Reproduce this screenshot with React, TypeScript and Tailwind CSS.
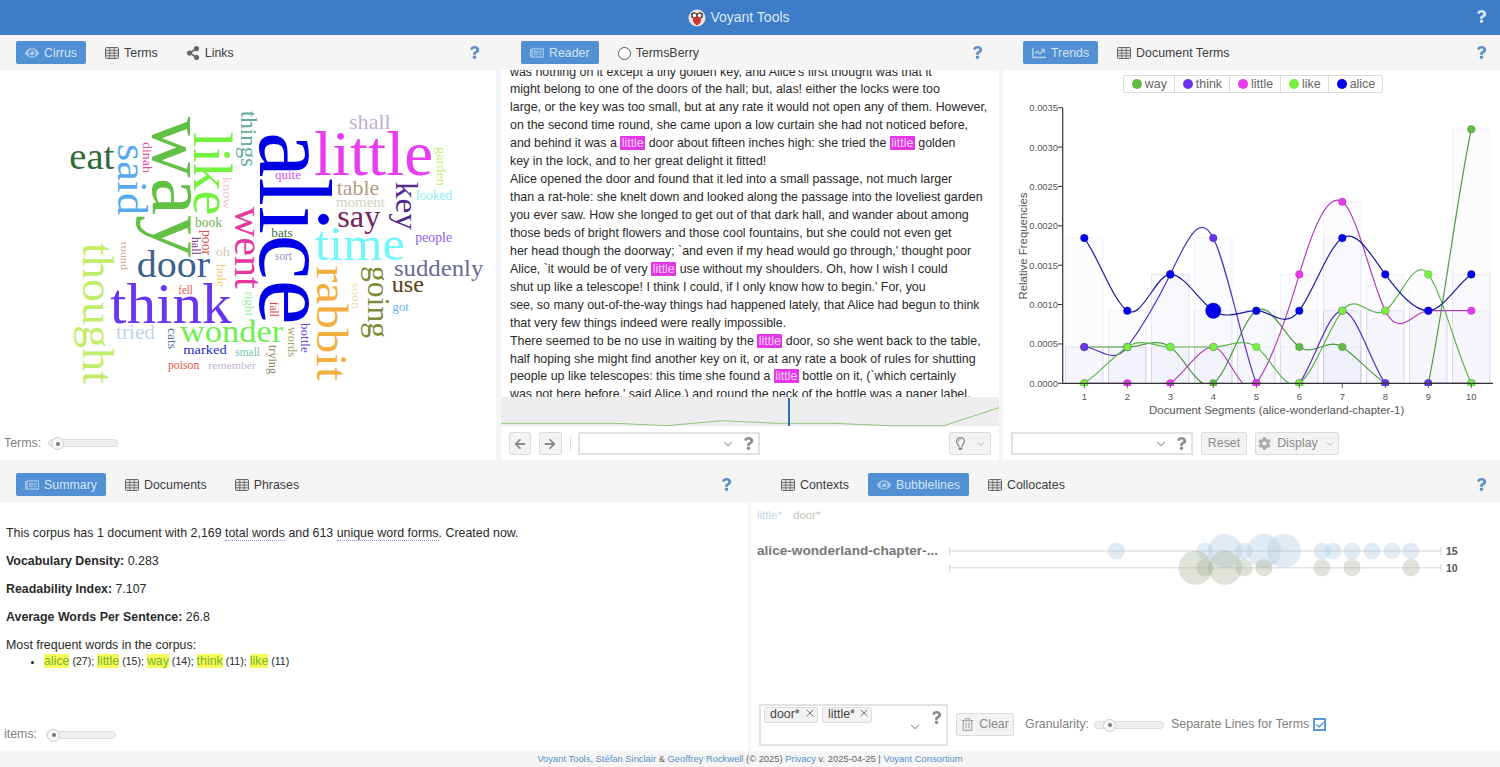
import React from "react";
import {
  FaArrowLeft,
  FaArrowRight,
  FaCheck,
  FaChartLine,
  FaCog,
  FaEye,
  FaQuestion,
  FaRegLightbulb,
  FaRegNewspaper,
  FaRegTrashAlt,
  FaShareAlt,
} from "react-icons/fa";
import { ChevronDown, X } from "lucide-react";

// word, x, y, length, size, colour (x/y is the start of the baseline)
const flatWords: [string, number, number, number, number, string][] = [
  ["little", 314, 175, 119, 63, "#e83cf0"],
  ["eat", 69.3, 169, 45, 37, "#2f6b38"],
  ["shall", 349, 128.7, 41.7, 22, "#c4aed6"],
  ["quite", 275, 179.3, 26, 12, "#d04fe8"],
  ["table", 336.7, 195, 42.6, 21, "#b89a7e"],
  ["moment", 336, 206.7, 49, 14, "#cfcfc6"],
  ["looked", 416, 200, 36, 14, "#8ef0f5"],
  ["say", 337.3, 226.7, 43, 31, "#77235f"],
  ["book", 195, 227.3, 27, 14, "#6fb85a"],
  ["bats", 271.3, 236.7, 21.3, 13, "#3f6f43"],
  ["people", 415.3, 241.7, 36.7, 14, "#8a5cf0"],
  ["time", 315, 260, 90, 48, "#73f5fa"],
  ["oh", 215.7, 256, 14.3, 13, "#cfc8a8"],
  ["sort", 275, 260, 17, 12, "#9c8ec0"],
  ["door", 136.7, 276.7, 73.3, 37, "#3f5f8f"],
  ["suddenly", 394, 275.7, 89.3, 24, "#6a6a9a"],
  ["use", 391.7, 292.3, 32.3, 23, "#5a3d12"],
  ["fell", 178.3, 294, 14.4, 12, "#e05a4f"],
  ["think", 110, 323.3, 121.7, 58, "#6a35f0"],
  ["got", 392.3, 310.7, 16.7, 13, "#6ab5f5"],
  ["tried", 116, 339.3, 39, 21, "#bfd4e6"],
  ["wonder", 180, 341.7, 103.3, 32, "#6fef4f"],
  ["marked", 183.3, 354.3, 43.4, 13, "#2828d0"],
  ["small", 235.3, 356, 24.7, 12, "#76c0b0"],
  ["poison", 168, 368.7, 31.3, 12, "#e0523f"],
  ["remember", 208.3, 368.7, 47.7, 11, "#c4b4d4"],
];

const turnedWords: [string, number, number, number, number, string][] = [
  ["alice", 260, 132, 193, 103, "#0000e6"],
  ["way", 153, 117, 140, 80, "#62c045"],
  ["like", 194, 132, 83, 54, "#73f23d"],
  ["things", 241, 111, 56, 23, "#66aaa0"],
  ["said", 118, 144, 71, 42, "#55aaf0"],
  ["dinah", 143.3, 142, 31, 13, "#e54f9e"],
  ["know", 222.7, 176.7, 32.3, 12, "#f5c5cf"],
  ["garden", 437, 147, 39, 13, "#c9ee7a"],
  ["key", 395.7, 181.7, 48.3, 32, "#552a8f"],
  ["went", 235, 206.7, 82, 40, "#e5399e"],
  ["poor", 201.7, 230, 25, 14, "#d9534f"],
  ["hall", 192.3, 236.7, 18.3, 13, "#7d3c8c"],
  ["round", 120.7, 241.7, 28.3, 11, "#d4a797"],
  ["hole", 216.7, 264, 23, 13, "#f5c97c"],
  ["thought", 83.3, 243, 141, 45, "#c1ee6a"],
  ["right", 245, 291.7, 24.3, 12, "#9cf09a"],
  ["fall", 270, 301.7, 15.3, 12, "#d9463f"],
  ["soon", 351.7, 282.7, 26.3, 12, "#efe0b0"],
  ["rabbit", 316.7, 266, 114.7, 45, "#f4ae3d"],
  ["going", 367.7, 266, 72, 32, "#7f8a3a"],
  ["words", 287.7, 327, 30, 12, "#9da56a"],
  ["bottle", 300.7, 323, 29.7, 13, "#6a3fd0"],
  ["trying", 269.3, 345, 29, 12, "#8a8356"],
  ["cats", 168.3, 328, 21, 12, "#4f6b9a"],
];

const readerLines = [
  "was nothing on it except a tiny golden key, and Alice's first thought was that it",
  "might belong to one of the doors of the hall; but, alas! either the locks were too",
  "large, or the key was too small, but at any rate it would not open any of them. However,",
  "on the second time round, she came upon a low curtain she had not noticed before,",
  "and behind it was a |little| door about fifteen inches high: she tried the |little| golden",
  "key in the lock, and to her great delight it fitted!",
  "Alice opened the door and found that it led into a small passage, not much larger",
  "than a rat-hole: she knelt down and looked along the passage into the loveliest garden",
  "you ever saw. How she longed to get out of that dark hall, and wander about among",
  "those beds of bright flowers and those cool fountains, but she could not even get",
  "her head though the doorway; `and even if my head would go through,' thought poor",
  "Alice, `it would be of very |little| use without my shoulders. Oh, how I wish I could",
  "shut up like a telescope! I think I could, if I only know how to begin.' For, you",
  "see, so many out-of-the-way things had happened lately, that Alice had begun to think",
  "that very few things indeed were really impossible.",
  "There seemed to be no use in waiting by the |little| door, so she went back to the table,",
  "half hoping she might find another key on it, or at any rate a book of rules for shutting",
  "people up like telescopes: this time she found a |little| bottle on it, (`which certainly",
  "was not here before,' said Alice,) and round the neck of the bottle was a paper label,",
];

const trendTerms = [
  { name: "way", dot: "#62b944", line: "#4f9a3c", counts: [1, 1, 1, 0, 2, 1, 1, 0, 0, 7] },
  { name: "think", dot: "#6a35ec", line: "#5a2fc0", counts: [1, 1, 3, 4, 0, 0, 2, 0, 0, 0] },
  { name: "little", dot: "#e63ae9", line: "#b040b8", counts: [0, 0, 0, 1, 0, 3, 5, 2, 2, 2] },
  { name: "like", dot: "#77f042", line: "#5cb84a", counts: [0, 1, 1, 1, 1, 0, 2, 2, 3, 0] },
  { name: "alice", dot: "#0000ee", line: "#1a1a9a", counts: [4, 2, 3, 2, 2, 2, 4, 3, 2, 3] },
];

const segX = (i: number) => 1084.3 + i * 43;
const countY = (c: number) => 383.3 - c * 36.3;

// cardinal spline through the counts, same overshoot as the original chart
const curvePath = (counts: number[]) => {
  const k = 0.8;
  const slope = (i: number) =>
    k * (counts[Math.min(i + 1, counts.length - 1)] - counts[Math.max(i - 1, 0)]);
  let d = `M${segX(0)} ${countY(counts[0])}`;
  for (let i = 0; i < counts.length - 1; i++) {
    const y1 = countY(counts[i] + slope(i) / 3);
    const y2 = countY(counts[i + 1] - slope(i + 1) / 3);
    d += ` C${segX(i) + 14.33} ${y1} ${segX(i + 1) - 14.33} ${y2} ${segX(i + 1)} ${countY(counts[i + 1])}`;
  }
  return d;
};

const yTicks = ["0.0000", "0.0005", "0.0010", "0.0015", "0.0020", "0.0025", "0.0030", "0.0035"];

const littleBubbles: [number, number][] = [
  [1116.5, 8.6], [1205, 8.6], [1225, 17], [1244, 8.6], [1264, 17], [1284, 17],
  [1322, 8.6], [1333, 8.6], [1352, 8.6], [1372, 8.6], [1392, 8.6], [1411, 8.6],
];
const doorBubbles: [number, number][] = [
  [1195.5, 17], [1205, 8.6], [1225, 17], [1244, 8.6], [1264, 8.6],
  [1322, 8.6], [1352, 8.6], [1411, 8.6],
];

const GridIcon = () => (
  <svg width="14" height="12" viewBox="0 0 14 12" className="shrink-0">
    <rect x="0.5" y="0.5" width="13" height="11" rx="1" fill="#e4e4e4" stroke="#666" />
    <path d="M0.5 3.4H13.5M0.5 6.1H13.5M0.5 8.8H13.5M4.8 0.5V11.5M9.2 0.5V11.5" stroke="#666" strokeWidth="0.9" fill="none" />
  </svg>
);

const Tab = ({ icon, label, active }: { icon: React.ReactNode; label: string; active?: boolean }) => (
  <div
    className={`flex h-[23px] items-center gap-[5px] rounded-[2px] px-[9px] pt-[1px] ${
      active ? "bg-[#5090d3] text-[#d3e4f6]" : "text-[#404040]"
    }`}
  >
    {icon}
    <span>{label}</span>
  </div>
);

const TabBar = ({
  children,
  left = "pl-[20px]",
  right = "pr-[15px]",
}: {
  children: React.ReactNode;
  left?: string;
  right?: string;
}) => (
  <div className={`flex h-[35px] shrink-0 items-center justify-between ${left} ${right}`}>
    <div className="flex items-center gap-[10px]">{children}</div>
    <FaQuestion className="text-[#5f8fc8]" size={13} />
  </div>
);

const Slider = ({ className = "", knob = "left-[2px]" }: { className?: string; knob?: string }) => (
  <div className={`relative h-[8px] w-[70px] rounded-full border border-[#dcdcdc] bg-[#f0f0f0] ${className}`}>
    <div className={`absolute -top-[3px] flex h-[13px] w-[13px] items-center justify-center rounded-full border border-[#cfcfcf] bg-[#f7f7f7] ${knob}`}>
      <div className="h-[4px] w-[4px] rounded-full bg-[#777]" />
    </div>
  </div>
);

const Combo = ({ className }: { className: string }) => (
  <div className={`flex h-[23px] items-center justify-end gap-[7px] border-2 border-[#e2e2e2] bg-white pr-[3px] ${className}`}>
    <ChevronDown size={14} className="text-[#aaa]" />
    <FaQuestion size={13} className="text-[#8c8c8c]" />
  </div>
);

const ToolButton = ({ children, className = "" }: { children: React.ReactNode; className?: string }) => (
  <div className={`flex h-[23px] items-center justify-center rounded-[2px] border border-[#dcdcdc] bg-[#f3f3f3] text-[#8a8a8a] ${className}`}>
    {children}
  </div>
);

const Hit = ({ word }: { word: string }) => (
  <span className="bg-[#f6fb5a] text-[12.4px] text-[#7ab32a]">{word}</span>
);

const Chip = ({ label, className }: { label: string; className: string }) => (
  <div className={`flex h-[16px] items-center justify-between rounded-[2px] border border-[#dcdcdc] bg-[#f3f3f3] pl-[5px] pr-[1px] text-[#444] ${className}`}>
    <span>{label}</span>
    <X size={12} className="mb-[3px] text-[#777]" />
  </div>
);

export default function App() {
  return (
    <div className="flex h-[767px] w-[1500px] flex-col overflow-hidden bg-[#f5f5f5] font-['Liberation_Sans',Arial,sans-serif] text-[12.4px] text-[#333]">
      {/* header */}
      <div className="relative flex h-[35px] shrink-0 items-center justify-center gap-[4px] bg-[#3d7cc6] pr-[22px] text-[14px] text-[#d9e8f8]">
        <svg width="18" height="18" viewBox="0 0 18 18">
          <circle cx="9" cy="9" r="8.5" fill="#e9e2de" />
          <path d="M3 4.5 L6 3 L9 4.5 L12 3 L15 4.5 L14.5 9 H3.5 Z" fill="#4a3a3a" />
          <path d="M5 8 Q9 6.5 13 8 Q14 14 9 16.5 Q4 14 5 8 Z" fill="#c43a32" />
          <circle cx="6.4" cy="6.4" r="1.8" fill="#fff" />
          <circle cx="11.6" cy="6.4" r="1.8" fill="#fff" />
        </svg>
        <span>Voyant Tools</span>
        <FaQuestion size={13} className="absolute right-[12px] top-[10px] text-[#d9e8f8]" />
      </div>

      {/* top row */}
      <div className="flex h-[425px] shrink-0">
        <div className="flex w-[496px] flex-col">
          <TabBar left="pl-[16px]">
            <Tab active label="Cirrus" icon={<FaEye size={14} className="text-[#a9c8ea]" />} />
            <Tab label="Terms" icon={<GridIcon />} />
            <Tab label="Links" icon={<FaShareAlt size={14} className="text-[#666]" />} />
          </TabBar>
          <div className="flex flex-1 flex-col bg-white">
            <svg width="496" height="340" viewBox="0 70 496 340" className="font-['Liberation_Serif',serif]">
              {flatWords.map(([word, x, y, len, size, color]) => (
                <text key={word} x={x} y={y} fontSize={size} fill={color} textLength={len} lengthAdjust="spacingAndGlyphs">
                  {word}
                </text>
              ))}
              {turnedWords.map(([word, x, y, len, size, color]) => (
                <text key={word} transform={`translate(${x} ${y}) rotate(90)`} fontSize={size} fill={color} textLength={len} lengthAdjust="spacingAndGlyphs">
                  {word}
                </text>
              ))}
            </svg>
            <div className="mt-[24px] flex items-center gap-[7px] pl-[4px] text-[#808080]">
              <span>Terms:</span>
              <Slider />
            </div>
          </div>
        </div>

        <div className="ml-[5px] flex w-[498px] flex-col">
          <TabBar>
            <Tab active label="Reader" icon={<FaRegNewspaper size={14} className="text-[#a9c8ea]" />} />
            <Tab
              label="TermsBerry"
              icon={<div className="h-[13px] w-[13px] rounded-full border border-[#555] bg-white" />}
            />
          </TabBar>
          <div className="flex flex-1 flex-col bg-white">
            <div className="h-[327px] overflow-hidden px-[9px]">
              <div className="-mt-[6.5px] leading-[17.94px] text-[#2a2a2a]">
                {readerLines.map((line, i) => (
                  <div key={i} className="whitespace-nowrap">
                    {line.split("|").map((part, j) =>
                      j % 2 ? (
                        <span key={j} className="rounded-[1px] bg-[#e535e8] px-[1.5px] text-[#f7d4f8]">
                          {part}
                        </span>
                      ) : (
                        part
                      )
                    )}
                  </div>
                ))}
              </div>
            </div>
            <svg width="498" height="30" viewBox="0 397 498 30" className="shrink-0">
              <rect x="0" y="397" width="498" height="29" fill="#eeeeee" />
              <path d="M0 423.3L113 423.3L166 425.7L221 420.7L276 423.3L333 423.3L386 425.7L443 425.7L498 407.7" fill="none" stroke="#8cc97c" strokeWidth="1" />
              <path d="M288 398V426" stroke="#2c6db5" strokeWidth="2" />
            </svg>
            <div className="flex flex-1 items-center pl-[7.5px] pr-[8px]">
              <ToolButton className="w-[22.5px]"><FaArrowLeft size={12} /></ToolButton>
              <ToolButton className="ml-[8px] w-[22.5px]"><FaArrowRight size={12} /></ToolButton>
              <div className="ml-[8px] h-[13px] w-px bg-[#ddd]" />
              <Combo className="ml-[7px] w-[182px]" />
              <ToolButton className="ml-auto w-[42px] gap-[8px]">
                <FaRegLightbulb size={13} />
                <ChevronDown size={12} className="text-[#bbb]" />
              </ToolButton>
            </div>
          </div>
        </div>

        <div className="ml-[4px] flex w-[497px] flex-col">
          <TabBar right="pr-[12px]">
            <Tab active label="Trends" icon={<FaChartLine size={14} className="text-[#a9c8ea]" />} />
            <Tab label="Document Terms" icon={<GridIcon />} />
          </TabBar>
          <div className="flex flex-1 flex-col bg-white">
            <div className="flex justify-center pl-[3px] pt-[5px]">
              <div className="flex h-[18px] items-center rounded-[2px] border border-[#dcdcdc] text-[#666]">
                {trendTerms.map((t, i) => (
                  <div key={t.name} className={`flex h-full items-center gap-[3px] pl-[8px] pr-[7px] ${i ? "border-l border-[#dcdcdc]" : ""}`}>
                    <svg width="10" height="10" viewBox="0 0 10 10">
                      <circle cx="5" cy="5" r="5" fill={t.dot} />
                    </svg>
                    <span>{t.name}</span>
                  </div>
                ))}
              </div>
            </div>
            <svg width="497" height="334" viewBox="1003 93 497 334" className="shrink-0">
              <defs>
                <clipPath id="plot">
                  <rect x="1063" y="100" width="437" height="283.3" />
                </clipPath>
                <clipPath id="dots">
                  <rect x="1063" y="100" width="437" height="286" />
                </clipPath>
              </defs>
              {trendTerms.map((t) =>
                t.counts.map((c, i) =>
                  c > 0 ? (
                    <rect
                      key={t.name + i}
                      x={segX(i) - 18.7}
                      y={countY(c)}
                      width="37.4"
                      height={c * 36.3}
                      fill="#6a5ad8"
                      fillOpacity="0.018"
                      stroke="#6a5ad8"
                      strokeOpacity="0.07"
                    />
                  ) : null
                )
              )}
              <g clipPath="url(#plot)">
                {trendTerms.map((t) => (
                  <path key={t.name} d={curvePath(t.counts)} fill="none" stroke={t.line} strokeWidth="1.2" />
                ))}
              </g>
              <g clipPath="url(#dots)">
                {trendTerms.map((t) =>
                  t.counts.map((c, i) => (
                    <circle
                      key={t.name + i}
                      cx={segX(i)}
                      cy={countY(c)}
                      r={t.name === "alice" && i === 3 ? 7.7 : 3.8}
                      fill={t.dot}
                      stroke={t.line}
                      strokeOpacity="0.6"
                      strokeWidth="0.8"
                    />
                  ))
                )}
              </g>
              <path d="M1062.7 107.7V383.3H1493" fill="none" stroke="#333" strokeWidth="1.2" />
              {yTicks.map((label, i) => (
                <g key={label}>
                  <path d={`M1058 ${383.3 - i * 39.37}H1062.7`} stroke="#333" />
                  <text x="1058" y={383.3 - i * 39.37 + 3.5} textAnchor="end" fontSize="9.4" fill="#555">
                    {label}
                  </text>
                </g>
              ))}
              {trendTerms[0].counts.map((_, i) => (
                <g key={i}>
                  <path d={`M${segX(i)} 383.3V388`} stroke="#555" />
                  <text x={segX(i)} y="399.5" textAnchor="middle" fontSize="9.4" fill="#555">
                    {i + 1}
                  </text>
                </g>
              ))}
              <text x="1276.7" y="414" textAnchor="middle" fontSize="11.4" fill="#555">
                Document Segments (alice-wonderland-chapter-1)
              </text>
              <text transform="translate(1027 246) rotate(-90)" textAnchor="middle" fontSize="11.4" fill="#555">
                Relative Frequencies
              </text>
            </svg>
            <div className="flex flex-1 items-center pl-[8px]">
              <Combo className="w-[182px]" />
              <ToolButton className="ml-[8px] w-[46px]">Reset</ToolButton>
              <ToolButton className="ml-[8px] w-[84px] gap-[6px]">
                <FaCog size={13} className="text-[#aaa]" />
                <span>Display</span>
                <ChevronDown size={12} className="text-[#bbb]" />
              </ToolButton>
            </div>
          </div>
        </div>
      </div>

      {/* bottom row */}
      <div className="mt-[7px] flex h-[284px] shrink-0">
        <div className="flex w-[748px] flex-col">
          <TabBar left="pl-[16px]">
            <Tab active label="Summary" icon={<FaRegNewspaper size={14} className="text-[#a9c8ea]" />} />
            <Tab label="Documents" icon={<GridIcon />} />
            <Tab label="Phrases" icon={<GridIcon />} />
          </TabBar>
          <div className="flex flex-1 flex-col bg-white pl-[6px] leading-[15px] text-[#2a2a2a]">
            <p className="mt-[23.5px]">
              This corpus has 1 document with 2,169{" "}
              <span className="border-b border-dotted border-[#8f8fd8]">total words</span> and 613{" "}
              <span className="border-b border-dotted border-[#8f8fd8]">unique word forms</span>. Created now.
            </p>
            <p className="mt-[13px]">
              <b>Vocabulary Density:</b> 0.283
            </p>
            <p className="mt-[13px]">
              <b>Readability Index:</b> 7.107
            </p>
            <p className="mt-[13px]">
              <b>Average Words Per Sentence:</b> 26.8
            </p>
            <p className="mt-[13px]">Most frequent words in the corpus:</p>
            <ul className="mt-[1px] list-disc pl-[38px] text-[10.6px] leading-[15px]">
              <li>
                <Hit word="alice" /> (27); <Hit word="little" /> (15); <Hit word="way" /> (14);{" "}
                <Hit word="think" /> (11); <Hit word="like" /> (11)
              </li>
            </ul>
            <div className="-ml-[2px] mb-[9px] mt-auto flex items-center gap-[6px] text-[#808080]">
              <span>items:</span>
              <Slider className="ml-[3px]" knob="left-[0px]" />
            </div>
          </div>
        </div>

        <div className="ml-[3px] flex w-[749px] flex-col">
          <TabBar left="pl-[21px]" right="pr-[12px]">
            <Tab label="Contexts" icon={<GridIcon />} />
            <Tab active label="Bubblelines" icon={<FaEye size={14} className="text-[#a9c8ea]" />} />
            <Tab label="Collocates" icon={<GridIcon />} />
          </TabBar>
          <div className="flex flex-1 flex-col bg-white">
            <svg width="749" height="195" viewBox="751 502 749 195" className="shrink-0">
              <text x="757" y="519" fontSize="11.5" fill="#c5d8e8">little*</text>
              <text x="793" y="519" fontSize="11.5" fill="#c4c9b8">door*</text>
              <text x="757" y="555" fontSize="13" fontWeight="bold" fill="#777" textLength="181" lengthAdjust="spacingAndGlyphs">
                alice-wonderland-chapter-...
              </text>
              <path d="M949.5 551H1441M949.5 567.7H1441" stroke="#e4e4e4" strokeWidth="1.6" />
              <path d="M949.5 547V555M1441 547V555M949.5 564V572M1441 564V572" stroke="#d5d5d5" />
              {littleBubbles.map(([x, r]) => (
                <circle key={x} cx={x} cy="551" r={r} fill="#a9c6df" fillOpacity="0.35" />
              ))}
              {doorBubbles.map(([x, r]) => (
                <circle key={x} cx={x} cy="567.7" r={r} fill="#a3ae92" fillOpacity="0.35" />
              ))}
              <text x="1446" y="555" fontSize="10.5" fontWeight="bold" fill="#555">15</text>
              <text x="1446" y="571.7" fontSize="10.5" fontWeight="bold" fill="#555">10</text>
            </svg>
            <div className="flex flex-1 items-center pl-[8px] pt-[1px]">
              <div className="relative h-[42px] w-[189px] border-2 border-[#e2e2e2] bg-white">
                <div className="flex gap-[4px] pl-[3px] pt-[1px]">
                  <Chip label="door*" className="w-[54px]" />
                  <Chip label="little*" className="w-[50px]" />
                </div>
                <ChevronDown size={14} className="absolute right-[24px] top-[14px] text-[#aaa]" />
                <FaQuestion size={13} className="absolute right-[3px] top-[5px] text-[#8c8c8c]" />
              </div>
              <ToolButton className="ml-[8px] w-[58px] gap-[5px]">
                <FaRegTrashAlt size={13} className="text-[#aaa]" />
                <span>Clear</span>
              </ToolButton>
              <span className="ml-[11px] text-[#808080]">Granularity:</span>
              <Slider className="ml-[5px]" knob="left-[8px]" />
              <span className="ml-[7px] text-[#808080]">Separate Lines for Terms</span>
              <div className="ml-[4px] flex h-[13px] w-[13px] items-center justify-center border-2 border-[#5b96d6] bg-white">
                <FaCheck size={8} className="text-[#5b96d6]" />
              </div>
            </div>
          </div>
        </div>
      </div>

      {/* footer */}
      <div className="flex-1 text-center text-[9.4px] leading-[16px] text-[#666]">
        <span className="text-[#5a8fc9]">Voyant Tools</span>,{" "}
        <span className="text-[#5a8fc9]">Stéfan Sinclair</span> &amp;{" "}
        <span className="text-[#5a8fc9]">Geoffrey Rockwell</span> (© 2025){" "}
        <span className="text-[#5a8fc9]">Privacy</span> v. 2025-04-25 |{" "}
        <span className="text-[#5a8fc9]">Voyant Consortium</span>
      </div>
    </div>
  );
}
